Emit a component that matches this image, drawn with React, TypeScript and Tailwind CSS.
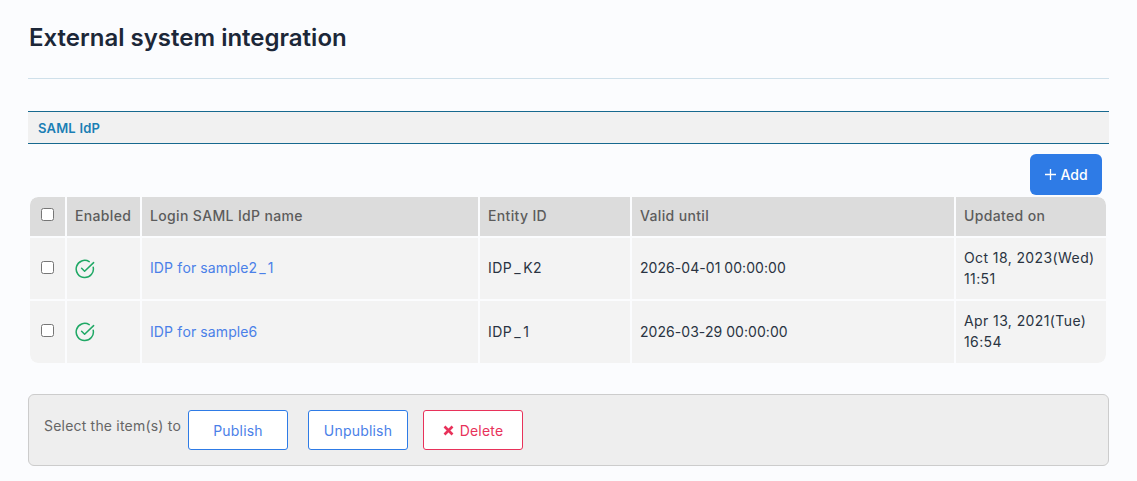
import React from "react";

const th = "bg-[#dcdcdc] font-[550] text-[#5c5c5c] text-left px-[8px] align-middle tracking-[0.35px] pb-[2px]";
const td = "bg-[#f3f3f3] text-[#2a3342] px-[8px] align-middle";

function Check() {
  return (
    <svg width="20" height="20" viewBox="0 0 20 20" fill="none" stroke="#1fa865" strokeWidth="1.5" strokeLinecap="round" strokeLinejoin="round" className="block">
      <path d="M18.2 8.2A8.6 8.6 0 1 1 14.2 2.6" />
      <path d="M6.6 9.2l3 3L18.6 3.6" />
    </svg>
  );
}

function Box() {
  return <span className="block w-[13px] h-[13px] ml-[3px] mb-[3px] border border-[#767676] rounded-[2.5px] bg-white" />;
}

function Under({ a, b }: { a: string; b: string }) {
  return (
    <>
      {a}
      <span className="mx-[2px]">_</span>
      {b}
    </>
  );
}

const rows = [
  [<Under a="IDP for sample2" b="1" />, <Under a="IDP" b="K2" />, "2026-04-01 00:00:00", "Oct 18, 2023(Wed)", "11:51"],
  ["IDP for sample6", <Under a="IDP" b="1" />, "2026-03-29 00:00:00", "Apr 13, 2021(Tue)", "16:54"],
];

export default function App() {
  return (
    <div className="w-[1137px] h-[481px] overflow-hidden bg-[#fbfcfe] font-['Inter','Liberation_Sans',sans-serif] text-[14px]">
      <div className="h-[79px] mx-[28px] border-b border-[#cfe0ea] pt-[21px]">
        <h1 className="text-[24px] leading-[34px] font-semibold text-[#1c2738] pl-px">External system integration</h1>
      </div>
      <div className="mx-[28px] mt-[32px] h-[33px] border-y border-[#17698f] bg-[#f1f1f1] flex items-center pl-[10px] pt-[2px] text-[13px] tracking-[0.2px] font-semibold text-[#1a7fb5]">
        SAML IdP
      </div>
      <div className="flex justify-end mx-[35px] mt-[10px]">
        <button className="w-[72px] h-[41px] pl-[1px] bg-[#2e7be6] rounded-[6px] text-white text-[14px] font-medium flex items-center justify-center gap-[4px]">
          <svg width="11" height="11" viewBox="0 0 11 11" stroke="white" strokeWidth="1.3"><path d="M5.5 0v11M0 5.5h11" /></svg>
          Add
        </button>
      </div>
      <div className="mx-[30px] mt-[2px]">
        <table className="w-[1076px] table-fixed border-collapse overflow-hidden rounded-[8px]">
          <colgroup>
            <col className="w-[36px]" /><col className="w-[75px]" /><col className="w-[338px]" />
            <col className="w-[152px]" /><col className="w-[324px]" /><col className="w-[151px]" />
          </colgroup>
          <thead>
            <tr className="h-[40px]">
              <th className={th + " border-r-2 border-[#fbfcfe] rounded-tl-[8px]"}><Box /></th>
              <th className={th + " border-r-2 border-[#fbfcfe]"}>Enabled</th>
              <th className={th + " border-r-2 border-[#fbfcfe]"}>Login SAML IdP name</th>
              <th className={th + " border-r-2 border-[#fbfcfe]"}>Entity ID</th>
              <th className={th + " border-r-2 border-[#fbfcfe]"}>Valid until</th>
              <th className={th + " rounded-tr-[8px]"}>Updated on</th>
            </tr>
          </thead>
          <tbody>
            {rows.map((r, i) => (
              <tr key={i} className="h-[63px] border-t-2 border-[#fbfcfe]">
                <td className={td + " border-r-2 border-[#fbfcfe]" + (i === 1 ? " rounded-bl-[8px]" : "")}><Box /></td>
                <td className={td + " border-r-2 border-[#fbfcfe]"}><Check /></td>
                <td className={td + " border-r-2 border-[#fbfcfe] text-[#4a80e8] tracking-[0.1px] [font-kerning:none]"}><span className="block mb-[2px]">{r[0]}</span></td>
                <td className={td + " border-r-2 border-[#fbfcfe] tracking-[0.5px] [font-kerning:none]"}><span className="block mb-[2px]">{r[1]}</span></td>
                <td className={td + " border-r-2 border-[#fbfcfe] tracking-[0.05px]"}><span className="block mb-[2px]">{r[2]}</span></td>
                <td className={td + " leading-[21px] tracking-[0.4px]" + (i === 1 ? " rounded-br-[8px]" : "")}><span className="block mb-[2px]">{r[3]}<br />{r[4]}</span></td>
              </tr>
            ))}
          </tbody>
        </table>
      </div>
      <div className="mx-[28px] mt-[31px] h-[72px] border border-[#cccccc] rounded-[6px] bg-[#eeeeee] flex items-start pt-[15px] pl-[15px] tracking-[0.2px]">
        <span className="text-[#666666] leading-[32px] mr-[7px]">Select the item(s) to</span>
        <button className="w-[100px] h-[40px] border border-[#2e7be6] rounded-[3px] bg-white text-[#4a80e8] mr-[20px]">Publish</button>
        <button className="w-[100px] h-[40px] border border-[#2e7be6] rounded-[3px] bg-white text-[#4a80e8] mr-[15px]">Unpublish</button>
        <button className="w-[100px] h-[40px] border border-[#e8325a] rounded-[3px] bg-white text-[#e8325a] flex items-center justify-center gap-[6px]">
          <svg width="11" height="11" viewBox="0 0 11 11" stroke="#e8325a" strokeWidth="2.6"><path d="M1.5 1.5l8 8M9.5 1.5l-8 8" /></svg>
          Delete
        </button>
      </div>
    </div>
  );
}
